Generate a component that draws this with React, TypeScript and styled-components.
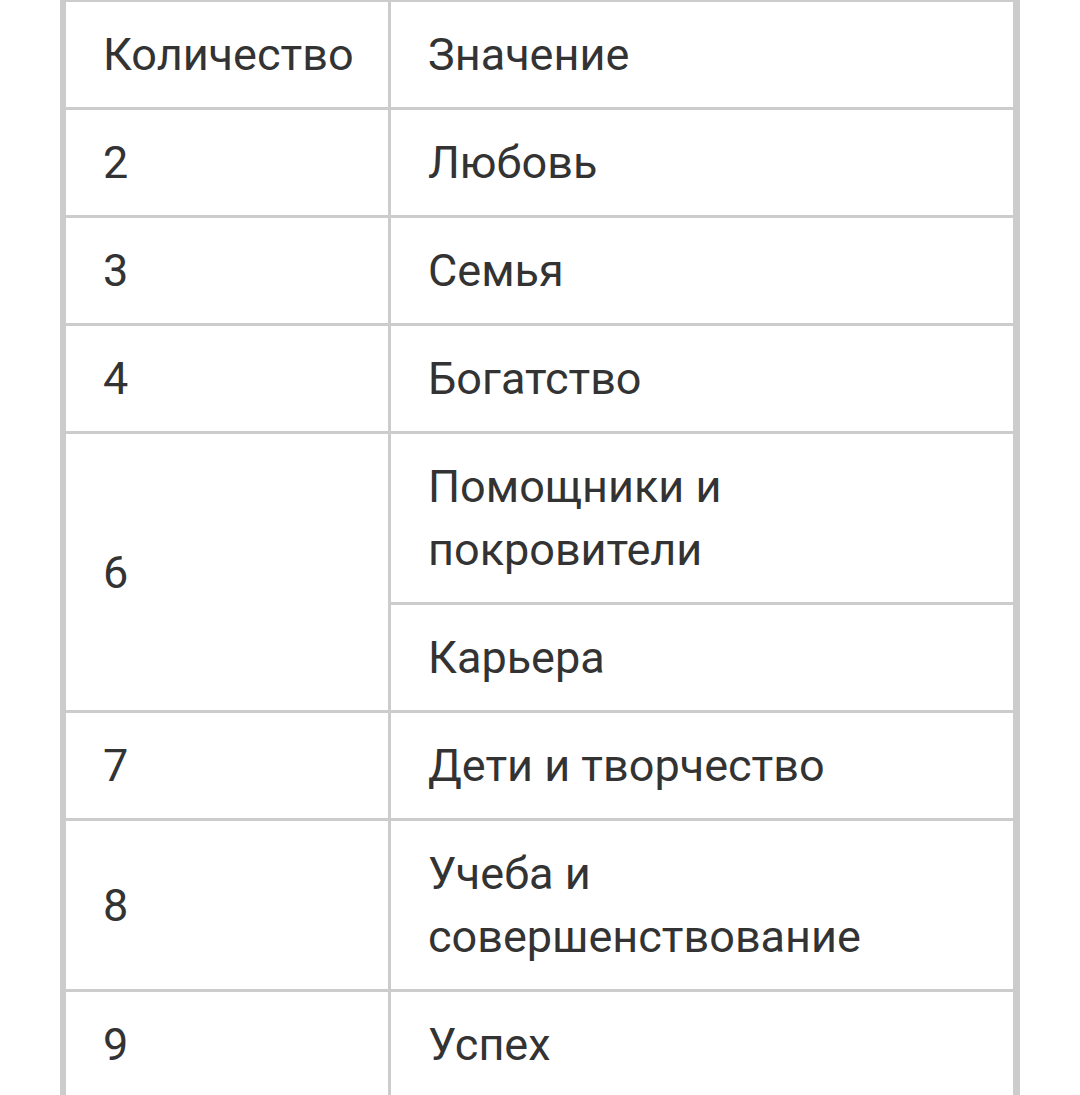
import styled, { createGlobalStyle } from 'styled-components';

const GlobalStyle = createGlobalStyle`
  html, body {
    margin: 0;
    padding: 0;
    background: #fff;
    overflow: hidden;
  }
`;

const Page = styled.div`
  padding-left: 60px;
  width: 960px;
  font-family: Roboto, 'Liberation Sans', sans-serif;
  color: #333;
`;

const Table = styled.table`
  width: 960px;
  border-collapse: separate;
  border-spacing: 0;
  border-left: 6px solid #cccccc;
  border-right: 7px solid #cccccc;
  border-top: 2px solid #cccccc;
  table-layout: fixed;
`;

const Cell = styled.td<{ $first?: boolean }>`
  padding: 21px 36px 21px 37px;
  font-size: 45px;
  line-height: 63px;
  font-weight: 400;
  text-align: left;
  vertical-align: middle;
  border-bottom: 3px solid #cccccc;
  border-right: ${({ $first }) => ($first ? '3px solid #cccccc' : 'none')};
`;

const HeadCell = styled(Cell).attrs({ as: 'th' })``;

type Row = { count: string; values: string[] };

const rows: Row[] = [
  { count: '2', values: ['Любовь'] },
  { count: '3', values: ['Семья'] },
  { count: '4', values: ['Богатство'] },
  { count: '6', values: ['Помощники и покровители', 'Карьера'] },
  { count: '7', values: ['Дети и творчество'] },
  { count: '8', values: ['Учеба и совершенствование'] },
  { count: '9', values: ['Успех'] },
];

const App = () => {
  return (
    <Page>
      <GlobalStyle />
      <Table>
        <colgroup>
          <col style={{ width: 325 }} />
          <col />
        </colgroup>
        <thead>
          <tr>
            <HeadCell $first>Количество</HeadCell>
            <HeadCell>Значение</HeadCell>
          </tr>
        </thead>
        <tbody>
          {rows.map((row) =>
            row.values.map((value, i) => (
              <tr key={row.count + value}>
                {i === 0 && (
                  <Cell $first rowSpan={row.values.length}>
                    {row.count}
                  </Cell>
                )}
                <Cell>{value}</Cell>
              </tr>
            ))
          )}
        </tbody>
      </Table>
    </Page>
  );
};

export default App;
